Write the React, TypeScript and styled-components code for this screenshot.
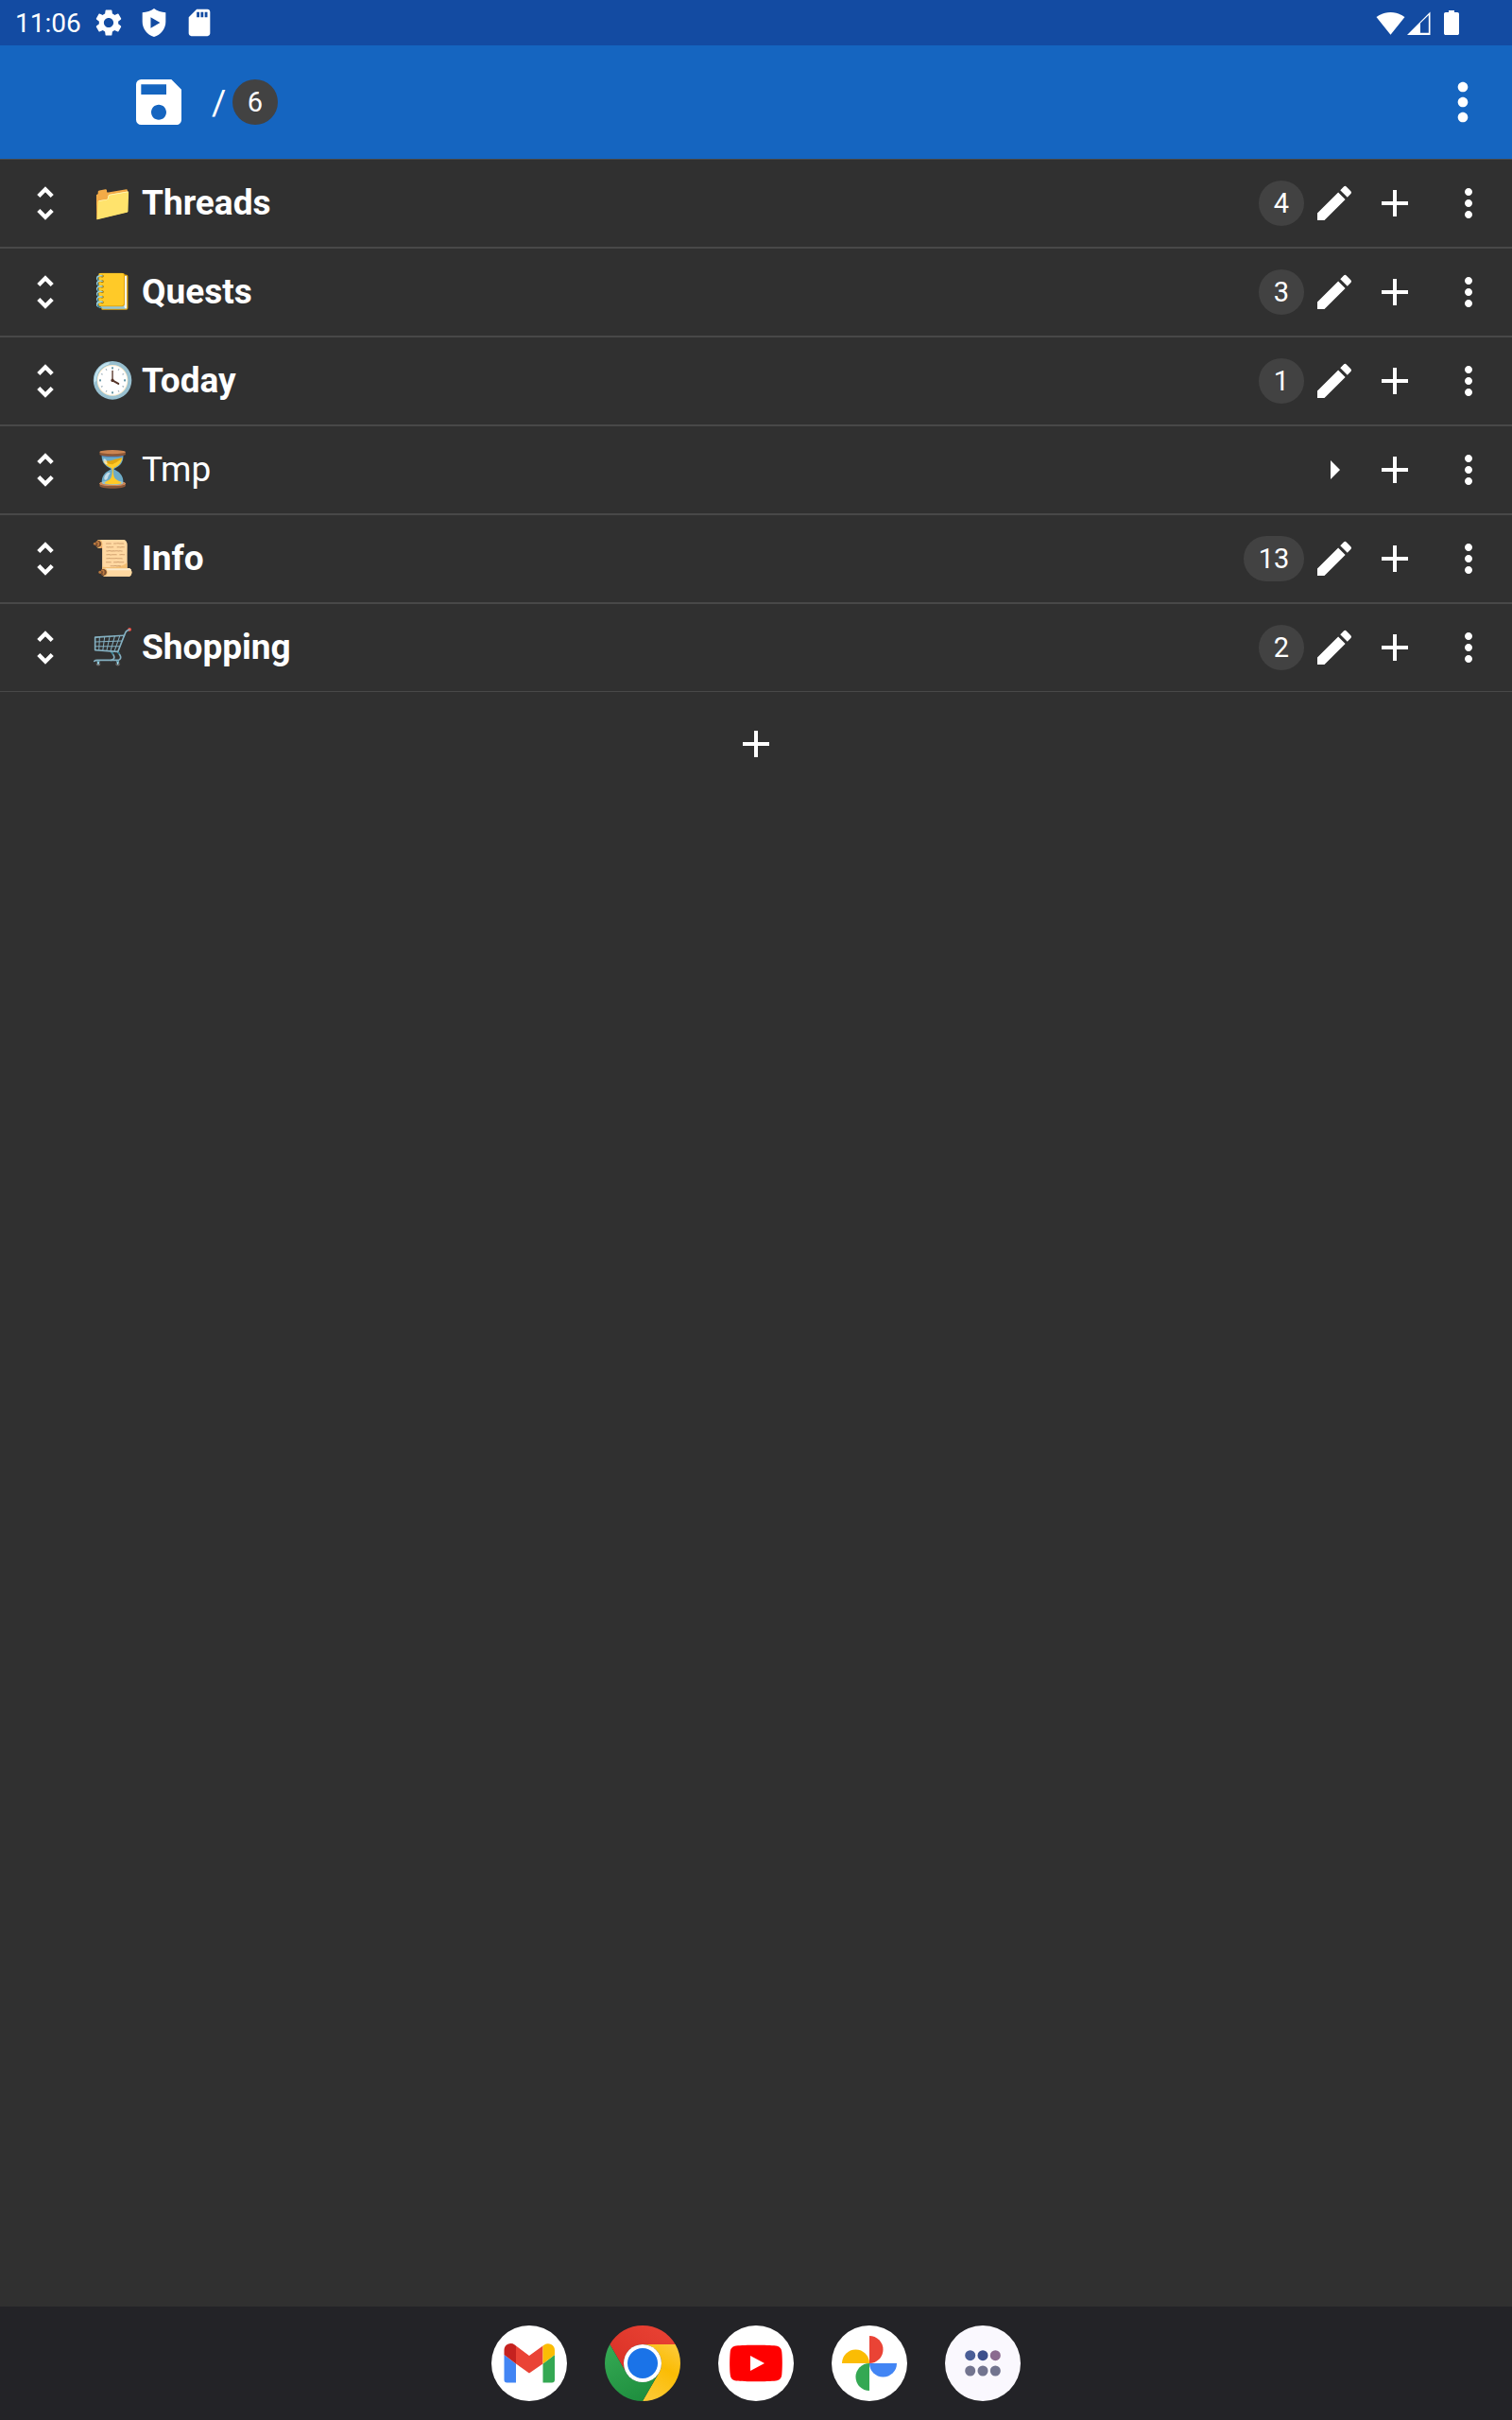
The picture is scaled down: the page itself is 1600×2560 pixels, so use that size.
import styled, { createGlobalStyle } from "styled-components"
import { MdAdd, MdArrowRight, MdEdit, MdMoreVert, MdSave, MdSdStorage, MdSettings, MdSignalWifi4Bar } from "react-icons/md"

const GlobalStyle = createGlobalStyle`
  html, body {
    margin: 0;
    padding: 0;
    background: #303030;
  }
  * {
    box-sizing: border-box;
  }
`

const Screen = styled.div`
  width: 1600px;
  height: 2560px;
  display: flex;
  flex-direction: column;
  background: #303030;
  color: #fff;
  font-family: Roboto, "Noto Color Emoji", sans-serif;
  overflow: hidden;
`

const StatusBar = styled.div`
  height: 48px;
  flex: none;
  display: flex;
  align-items: center;
  justify-content: space-between;
  padding: 0 56px 0 16px;
  background: #134ba2;
`

const StatusGroup = styled.div`
  display: flex;
  align-items: center;
  gap: 14px;
`

const Clock = styled.span`
  font-size: 28px;
  width: 68px;
`

const SignalGroup = styled.div`
  display: flex;
  align-items: center;
  gap: 2px;
`

const AppBar = styled.div`
  height: 120px;
  flex: none;
  display: flex;
  align-items: center;
  padding: 0 20px 0 136px;
  background: #1565c0;
`

const Slash = styled.span`
  width: 14px;
  font-size: 37px;
  margin: 0 8px 0 24px;
`

const Count = styled.span<{ $wide?: boolean }>`
  width: ${(p) => (p.$wide ? 64 : 48)}px;
  height: 48px;
  flex: none;
  border-radius: 24px;
  display: flex;
  align-items: center;
  justify-content: center;
  background: #424242;
  font-size: 29px;
`

const Spacer = styled.div`
  flex: 1;
`

const List = styled.div`
  flex: 1;
  display: flex;
  flex-direction: column;
  border-top: 1px solid #484848;
`

const Row = styled.div`
  height: 94px;
  display: flex;
  align-items: center;
  padding-left: 39px;
  border-bottom: 2px solid #484848;

  &:nth-last-child(2) {
    height: 93px;
    border-bottom-width: 1px;
  }
`

const Handle = styled.svg`
  width: 18px;
  height: 36px;
  flex: none;
  fill: none;
  stroke: #fff;
  stroke-width: 4.4;
`

const Emoji = styled.span`
  width: 44px;
  margin-left: 39px;
  padding-bottom: 2px;
  font-size: 37px;
  text-align: center;
`

const Title = styled.span<{ $light?: boolean }>`
  flex: 1;
  margin-left: 10px;
  padding-bottom: 2px;
  font-size: 37px;
  font-weight: ${(p) => (p.$light ? 400 : 700)};
`

const ActionSlot = styled.div`
  width: 64px;
  display: flex;
  justify-content: center;
`

const MenuSlot = styled(ActionSlot)`
  width: 92px;
`

const AddRow = styled.div`
  height: 110px;
  display: flex;
  align-items: center;
  justify-content: center;
`

const Dock = styled.div`
  height: 120px;
  flex: none;
  display: flex;
  align-items: center;
  justify-content: center;
  gap: 40px;
  background: #232327;
`

const DockIcon = styled.svg`
  width: 80px;
  height: 80px;
  display: block;
`

const rows = [
  { emoji: "📁", title: "Threads", count: 4 },
  { emoji: "📒", title: "Quests", count: 3 },
  { emoji: "🕓", title: "Today", count: 1 },
  { emoji: "⏳", title: "Tmp" },
  { emoji: "📜", title: "Info", count: 13 },
  { emoji: "🛒", title: "Shopping", count: 2 },
]

function ProtectIcon() {
  return (
    <svg width="34" height="34" viewBox="0 0 24 24" fill="#fff">
      <path
        fillRule="evenodd"
        d="M12 1.4C9.6 3.2 6.6 4.2 3.3 4.4v6.9c0 5.2 3.6 9.8 8.7 11.3 5.1-1.5 8.7-6.1 8.7-11.3V4.4C17.4 4.2 14.4 3.2 12 1.4zM9.5 8l7 4-7 4z"
      />
    </svg>
  )
}

function CellIcon() {
  return (
    <svg width="25" height="25" viewBox="0 0 25 25" fill="#fff">
      <path fillRule="evenodd" d="M0 25L24.5 0.5V25zM14 12.5V22.8H22.8V4z" />
    </svg>
  )
}

function BatteryIcon() {
  return (
    <svg width="16" height="26" viewBox="0 0 16 26" fill="#fff">
      <path d="M5 0h6v2h3.2c1 0 1.8.8 1.8 1.8v20.4c0 1-.8 1.8-1.8 1.8H1.8C.8 26 0 25.2 0 24.2V3.800C0 2.800.8 2 1.800 2H5z" />
    </svg>
  )
}

function GmailIcon() {
  return (
    <DockIcon viewBox="0 0 80 80">
      <circle cx="40" cy="40" r="40" fill="#fff" />
      <path d="M13.500 31L26 40.500V60.500H16.500a3 3 0 0 1-3-3z" fill="#4285f4" />
      <path d="M67 31L54.500 40.500V60.500H64a3 3 0 0 0 3-3z" fill="#34a853" />
      <path d="M13.500 31V26a7 7 0 0 1 11.200-5.500L26 21.500V40.500z" fill="#c5221f" />
      <path d="M26 21.500L40 32l14.500-10.500V40.500L40 50.500 26 40.500z" fill="#ea4335" />
      <path d="M54.500 21.500L56 20.500A7 7 0 0 1 67 26V31L54.500 40.500z" fill="#fbbc04" />
    </DockIcon>
  )
}

function ChromeIcon() {
  return (
    <DockIcon viewBox="0 0 80 80">
      <defs>
        <linearGradient id="chromeRed" x1="0" y1="1" x2="1" y2="0">
          <stop offset="0" stopColor="#d93025" />
          <stop offset="1" stopColor="#ea4335" />
        </linearGradient>
        <linearGradient id="chromeGreen" x1="0.2" y1="0" x2="0.7" y2="1">
          <stop offset="0" stopColor="#34a853" />
          <stop offset="1" stopColor="#1e8e3e" />
        </linearGradient>
        <linearGradient id="chromeYellow" x1="0.7" y1="0" x2="0.3" y2="1">
          <stop offset="0" stopColor="#fcc934" />
          <stop offset="0.4" stopColor="#fbbc04" />
          <stop offset="1" stopColor="#fcc934" />
        </linearGradient>
      </defs>
      <path d="M5.360 20A40 40 0 0 1 74.640 20H40A20 20 0 0 0 22.700 50z" fill="url(#chromeRed)" />
      <path d="M74.640 20A40 40 0 0 1 40 80L57.300 50A20 20 0 0 0 40 20z" fill="url(#chromeYellow)" />
      <path d="M40 80A40 40 0 0 1 5.360 20L22.700 50A20 20 0 0 0 57.300 50z" fill="url(#chromeGreen)" />
      <circle cx="40" cy="40" r="20" fill="#fff" />
      <circle cx="40" cy="40" r="16" fill="#1a73e8" />
    </DockIcon>
  )
}

function YoutubeIcon() {
  return (
    <DockIcon viewBox="0 0 80 80">
      <circle cx="40" cy="40" r="40" fill="#fff" />
      <path
        d="M19 21.500C28 20.500 52 20.500 61 21.500 65 22 67 24.500 67.300 28 68 34 68 46 67.300 52 67 55.500 65 58 61 58.500 52 59.500 28 59.500 19 58.500 15 58 13 55.500 12.700 52 12 46 12 34 12.700 28 13 24.500 15 22 19 21.500z"
        fill="#f00"
      />
      <path d="M34 32L49 40 34 48z" fill="#fff" />
    </DockIcon>
  )
}

function PhotosIcon() {
  return (
    <DockIcon viewBox="0 0 80 80">
      <circle cx="40" cy="40" r="40" fill="#fff" />
      <path d="M40 40V11A14.500 14.500 0 0 1 40 40z" fill="#ea4335" />
      <path d="M40 40H11A14.500 14.500 0 0 1 40 40z" fill="#fbbc04" />
      <path d="M40 40V69A14.500 14.500 0 0 1 40 40z" fill="#34a853" />
      <path d="M40 40H69A14.500 14.500 0 0 1 40 40z" fill="#4285f4" />
    </DockIcon>
  )
}

function AppsIcon() {
  return (
    <DockIcon viewBox="0 0 80 80">
      <circle cx="40" cy="40" r="40" fill="#faf8fe" />
      <circle cx="26.700" cy="31.700" r="5.500" fill="#4a5e97" />
      <circle cx="40" cy="31.700" r="5.500" fill="#3c4f8c" />
      <circle cx="53.300" cy="31.700" r="5.500" fill="#8b6a8f" />
      <circle cx="26.700" cy="48" r="5.500" fill="#72748f" />
      <circle cx="40" cy="48" r="5.500" fill="#72748f" />
      <circle cx="53.300" cy="48" r="5.500" fill="#72748f" />
    </DockIcon>
  )
}

export default function App() {
  return (
    <Screen>
      <GlobalStyle />
      <StatusBar>
        <StatusGroup>
          <Clock>11:06</Clock>
          <MdSettings size={34} />
          <ProtectIcon />
          <MdSdStorage size={34} />
        </StatusGroup>
        <StatusGroup>
          <SignalGroup>
            <MdSignalWifi4Bar size={31} />
            <CellIcon />
          </SignalGroup>
          <BatteryIcon />
        </StatusGroup>
      </StatusBar>
      <AppBar>
        <MdSave size={64} />
        <Slash>/</Slash>
        <Count>6</Count>
        <Spacer />
        <MdMoreVert size={64} />
      </AppBar>
      <List>
        {rows.map((r) => (
          <Row key={r.title}>
            <Handle viewBox="0 0 18 36">
              <path d="M1.800 10.500L9 3.300l7.200 7.200" />
              <path d="M1.800 25.500L9 32.700l7.200-7.200" />
            </Handle>
            <Emoji>{r.emoji}</Emoji>
            <Title $light={!r.count}>{r.title}</Title>
            {r.count ? <Count $wide={r.count > 9}>{r.count}</Count> : null}
            <ActionSlot>{r.count ? <MdEdit size={48} /> : <MdArrowRight size={48} />}</ActionSlot>
            <ActionSlot><MdAdd size={48} /></ActionSlot>
            <MenuSlot><MdMoreVert size={48} /></MenuSlot>
          </Row>
        ))}
        <AddRow><MdAdd size={48} /></AddRow>
      </List>
      <Dock>
        <GmailIcon />
        <ChromeIcon />
        <YoutubeIcon />
        <PhotosIcon />
        <AppsIcon />
      </Dock>
    </Screen>
  )
}
